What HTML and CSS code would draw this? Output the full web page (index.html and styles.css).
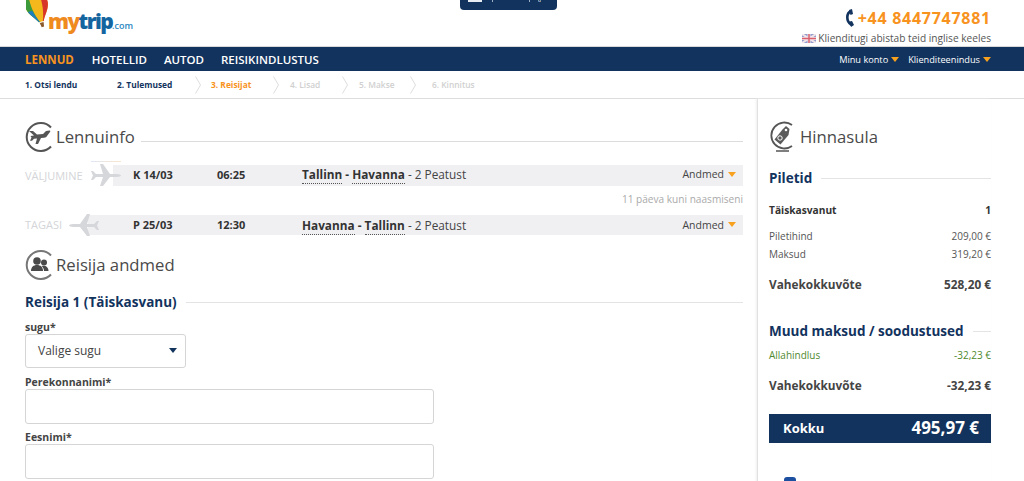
FILE: index.html
```html
<!DOCTYPE html>
<html lang="et">
<head>
<meta charset="utf-8">
<title>mytrip.com</title>
<link rel="stylesheet" href="styles.css">
</head>
<body>
<div class="page">
  <div class="tab"><span class="tab-flag"></span><span class="tab-sep"></span><span class="tab-text">Eesti</span><span class="tab-sep"></span><span class="tab-caret">v</span></div>
  <header class="top">
    <a class="logo">
      <svg class="balloon" width="25" height="29" viewBox="0 0 25 29">
        <g transform="rotate(-16 12 8)">
          <path d="M12 -6C4 -6 0 -1 0 4c0 7 7 13 9 18h5c2-5 9-11 9-18 0-5-4-10-11-10z" fill="#f5b81c"/>
          <path d="M0 4c0 7 7 13 9 18h1C7 15 5 5 6 -5 2 -4 0 0 0 4z" fill="#3c9a3a"/>
          <path d="M23 4c0 7-7 13-9 18h-1c3-7 5-17 4-27 4 1 6 5 6 9z" fill="#d8352a"/>
          <path d="M1.200 9c1.700 4 5.300 8.500 7.800 13h1C8 17 6.500 13 5.700 9z" fill="#1f7fbe"/>
          <path d="M9.500 23h4l-.8 4.500h-2.400z" fill="#8a5a2b"/>
        </g>
      </svg>
      <span class="logo-text"><span class="logo-my">my</span><span class="logo-trip">trip</span><span class="logo-com">.com</span></span>
    </a>
    <div class="contact">
      <div class="phone">
        <svg width="10" height="18" viewBox="0 0 10 18"><path d="M7 2C2.500 4 1.500 12 7.500 16" fill="none" stroke="#12335e" stroke-width="2.600"/><path d="M5 1l3-1 1 5-2.500 1zM5.500 12.500L8 12l2 4-3 2z" fill="#12335e"/></svg>
        <span>+44 8447747881</span>
      </div>
      <div class="support">
        <svg class="flag" width="14" height="9" viewBox="0 0 14 9"><rect width="14" height="9" fill="#8e9bcb"/><path d="M0 0l14 9M14 0L0 9" stroke="#f3e6ea" stroke-width="2"/><path d="M7 0v9M0 4.500h14" stroke="#f3e6ea" stroke-width="3"/><path d="M7 0v9M0 4.500h14" stroke="#d9606f" stroke-width="1.500"/></svg>
        <span>Klienditugi abistab teid inglise keeles</span>
      </div>
    </div>
  </header>
  <nav class="nav">
    <div class="nav-main">
      <a class="nav-link is-active">LENNUD</a>
      <a class="nav-link">HOTELLID</a>
      <a class="nav-link">AUTOD</a>
      <a class="nav-link">REISIKINDLUSTUS</a>
    </div>
    <div class="nav-side">
      <a class="nav-small">Minu konto<i class="caret"></i></a>
      <a class="nav-small">Klienditeenindus<i class="caret"></i></a>
    </div>
  </nav>
  <div class="steps">
    <span class="step step-1 is-done">1. Otsi lendu</span>
    <span class="step step-2 is-done">2. Tulemused</span>
    <svg class="chev" width="6" height="18" viewBox="0 0 6 18"><path d="M0.500 0.500L5.500 9L0.500 17.500" fill="none" stroke="#ddd"/></svg>
    <span class="step step-3 is-current">3. Reisijat</span>
    <svg class="chev" width="6" height="18" viewBox="0 0 6 18"><path d="M0.500 0.500L5.500 9L0.500 17.500" fill="none" stroke="#ddd"/></svg>
    <span class="step step-4">4. Lisad</span>
    <svg class="chev" width="6" height="18" viewBox="0 0 6 18"><path d="M0.500 0.500L5.500 9L0.500 17.500" fill="none" stroke="#ddd"/></svg>
    <span class="step step-5">5. Makse</span>
    <svg class="chev" width="6" height="18" viewBox="0 0 6 18"><path d="M0.500 0.500L5.500 9L0.500 17.500" fill="none" stroke="#ddd"/></svg>
    <span class="step step-6">6. Kinnitus</span>
  </div>
  <main class="main">
    <section class="content">
      <div class="heading heading-flight">
        <svg class="round-icon" width="30" height="32" viewBox="0 0 30 32">
          <path d="M26 6.500A14 14 0 1 0 26 25.500" fill="none" stroke="#555" stroke-width="2"/>
          <path d="M4 10l4 0 4 3.500 6-.5 3-3 3.500-.5c1 0 1 1 .5 1.500L22 15c-.5 1-1.500 1.500-3 1.700l-3 .3-3 6h-2.500l1.500-5.500-3 .3-2 2H5l1.500-3.300L5.500 15 9 14.500z" fill="#555"/>
        </svg>
        <h2 class="heading-text">Lennuinfo</h2>
        <span class="rule"></span>
      </div>
      <div class="flight flight-out">
        <i class="leg-glint"></i>
        <div class="leg-head leg-head-out">
          <span class="leg-label">VÄLJUMINE</span>
          <svg class="leg-plane" width="30" height="24" viewBox="0 0 30 24"><path d="M0 8l2 0 3 3h7L9 1h3l7 10h7c2 0 4 1 4 1.500S28 14 26 14h-7l-7 9H9l3-9H5l-3 3H0l2-4.500z" fill="#d6d7da"/></svg>
        </div>
        <div class="leg-bar leg-bar-out">
          <span class="leg-date">K 14/03</span>
          <span class="leg-time">06:25</span>
          <span class="leg-route"><b class="city">Tallinn</b> <b>-</b> <b class="city">Havanna</b> - 2 Peatust</span>
          <span class="leg-more">Andmed<i class="caret"></i></span>
        </div>
      </div>
      <div class="gap-note">11 päeva kuni naasmiseni</div>
      <div class="flight flight-back">
        <div class="leg-head leg-head-back">
          <span class="leg-label">TAGASI</span>
          <svg class="leg-plane" width="30" height="24" viewBox="0 0 30 24"><path d="M30 8h-2l-3 3h-7l3-10h-3l-7 10H4c-2 0-4 1-4 1.500S2 14 4 14h7l7 9h3l-3-9h7l3 3h2l-2-4.500z" fill="#d6d7da"/></svg>
        </div>
        <div class="leg-bar leg-bar-back">
          <span class="leg-date">P 25/03</span>
          <span class="leg-time">12:30</span>
          <span class="leg-route"><b class="city">Havanna</b> <b>-</b> <b class="city">Tallinn</b> - 2 Peatust</span>
          <span class="leg-more">Andmed<i class="caret"></i></span>
        </div>
      </div>
      <div class="heading heading-traveller">
        <svg class="round-icon" width="30" height="32" viewBox="0 0 30 32">
          <path d="M26 6.500A14 14 0 1 0 26 25.500" fill="none" stroke="#777" stroke-width="2"/>
          <circle cx="12" cy="12" r="3.800" fill="#4a4a4a"/><path d="M6 22c0-4 2.500-6 6-6s6 2 6 6z" fill="#4a4a4a"/>
          <circle cx="19" cy="13.500" r="3" fill="#4a4a4a"/><path d="M16.500 17c4-1 7 1 7 5h-4.500c0-2-1-4-2.500-5z" fill="#4a4a4a"/>
        </svg>
        <h2 class="heading-text">Reisija andmed</h2>
      </div>
      <div class="sub-heading">
        <h3 class="sub-title">Reisija 1 (Täiskasvanu)</h3>
        <span class="rule rule-soft"></span>
      </div>
      <form class="form">
        <label class="field-label">sugu*</label>
        <div class="select"><span>Valige sugu</span><i class="select-caret"></i></div>
        <label class="field-label">Perekonnanimi*</label>
        <div class="input"></div>
        <label class="field-label">Eesnimi*</label>
        <div class="input"></div>
      </form>
    </section>
    <aside class="side">
      <div class="heading heading-price">
        <svg class="round-icon" width="28" height="32" viewBox="0 0 28 32">
          <path d="M23 4A13 13 0 1 0 23 25" fill="none" stroke="#555" stroke-width="1.800"/>
          <path d="M7 30h13" stroke="#555" stroke-width="1.500"/>
          <path d="M17 5l3.500 3-1 6-8 9.500-6-5 8-10z" fill="#5a5a5a"/>
          <circle cx="17" cy="9" r="1.300" fill="#fff"/>
          <circle cx="11" cy="17" r="2.200" fill="none" stroke="#fff"/>
        </svg>
        <h2 class="heading-text heading-text-side">Hinnasula</h2>
      </div>
      <div class="sub-heading sub-heading-first">
        <h3 class="sub-title">Piletid</h3>
        <span class="rule rule-soft"></span>
      </div>
      <div class="row row-strong row-pax"><span>Täiskasvanut</span><span>1</span></div>
      <div class="row row-price"><span>Piletihind</span><span>209,00 €</span></div>
      <div class="row row-tax"><span>Maksud</span><span>319,20 €</span></div>
      <div class="row row-sub row-sub-first"><span>Vahekokkuvõte</span><span>528,20 €</span></div>
      <div class="sub-heading sub-heading-second">
        <h3 class="sub-title">Muud maksud / soodustused</h3>
        <span class="rule rule-soft"></span>
      </div>
      <div class="row row-discount"><span>Allahindlus</span><span>-32,23 €</span></div>
      <div class="row row-sub row-sub-second"><span>Vahekokkuvõte</span><span>-32,23 €</span></div>
      <div class="total"><span class="total-label">Kokku</span><span class="total-value">495,97 €</span></div>
      <div class="pay"><i class="pay-mark"></i><span class="pay-text">PayPal</span></div>
    </aside>
  </main>
</div>
</body>
</html>
```
FILE: styles.css
```css
* { box-sizing: border-box; }
html, body { margin: 0; height: 100%; overflow: hidden; background: #fff; }
body { font-family: "Open Sans", "Liberation Sans", sans-serif; color: #4a4a4a; }
h2, h3 { margin: 0; font-weight: 400; }
.page { position: relative; width: 1024px; height: 481px; overflow: hidden; }

.tab { position: absolute; top: 0; left: 460px; width: 97px; height: 10px; background: #12335e; border-radius: 0 0 4px 4px; display: flex; align-items: flex-end; padding: 0 0 8px 8px; color: #fff; font-size: 7px; line-height: 8px; }
.tab-flag { width: 14px; height: 3px; margin-top: -3px; margin-right: 10px; background: #e8edf3; }
.tab-sep { width: 1px; height: 8px; background: #9fb0c6; margin-right: 8px; }
.tab-text { margin-right: 8px; width: 20px; height: 5px; overflow: hidden; line-height: 2px; font-weight: 600; }
.tab-caret { font-size: 6px; line-height: 2px; height: 2px; overflow: hidden; }

.top { height: 47px; border-bottom: 1px solid #d8d8d8; display: flex; justify-content: space-between; padding: 0 33px 0 26px; }
.logo { display: flex; align-items: flex-start; height: 46px; }
.balloon { display: block; }
.logo-text { margin: 8px 0 0 -3px; font-weight: 800; font-size: 21px; line-height: 26px; letter-spacing: -1.600px; white-space: nowrap; }
.logo-my { color: #ef8a1e; }
.logo-trip { color: #14659f; }
.logo-com { color: #2a86bf; font-size: 9px; letter-spacing: 0; font-weight: 600; }
.contact { display: flex; flex-direction: column; align-items: flex-end; }
.phone { display: flex; align-items: center; gap: 4px; margin-top: 8px; height: 20px; color: #f7931e; font-size: 16px; font-weight: 700; letter-spacing: .73px; white-space: nowrap; }
.support { display: flex; align-items: center; gap: 2px; margin-top: 3px; height: 14px; font-size: 10.150px; color: #555; white-space: nowrap; }

.nav { height: 24px; background: #12335e; display: flex; justify-content: space-between; align-items: center; padding: 0 33px 0 25px; }
.nav-main { display: flex; gap: 17px; }
.nav-link { color: #fff; font-size: 11.500px; font-weight: 600; line-height: 23px; white-space: nowrap; }
.nav-link.is-active { color: #f7931e; font-weight: 700; margin-right: 1px; }
.nav-side { display: flex; gap: 9px; }
.nav-small { color: #fff; font-size: 9.200px; line-height: 23px; display: flex; align-items: center; white-space: nowrap; }
.caret { display: inline-block; width: 0; height: 0; margin-left: 4px; border-left: 4px solid transparent; border-right: 4px solid transparent; border-top: 5px solid #f7a11e; }
.nav-small .caret { margin-left: 3px; }

.steps { height: 28px; border-bottom: 1px solid #ddd; display: flex; align-items: center; padding-left: 25px; font-size: 8.400px; font-weight: 600; color: #d0d0d0; white-space: nowrap; }
.step-1 { width: 92px; }
.step-2 { width: 78px; }
.step-3 { width: 62px; margin-left: 10px; }
.step-4 { width: 52px; margin-left: 11px; }
.step-5 { width: 51px; margin-left: 11px; }
.step-6 { margin-left: 16px; }
.step.is-done { color: #12335e; font-weight: 700; }
.step.is-current { color: #f7931e; font-weight: 700; }
.chev { flex: none; }

.main { display: flex; padding-left: 25px; }
.content { width: 718px; padding-top: 22px; flex: none; }
.heading { display: flex; align-items: center; height: 32px; }
.round-icon { flex: none; display: block; }
.heading-text { font-size: 16.700px; line-height: 32px; color: #4a4a4a; margin-left: 1px; white-space: nowrap; }
.rule { flex: 1; height: 1px; background: #dcdcdc; margin-left: 6px; }
.heading-flight .rule { margin-top: 9px; }
.rule-soft { background: #e4e4e4; }

.flight { display: flex; height: 21px; position: relative; }
.flight-out { margin-top: 12px; }
.flight-back { margin-top: 1px; height: 20px; }
.leg-glint { position: absolute; left: 66px; top: -4px; width: 30px; height: 1px; background: linear-gradient(90deg, #dfe6f5, #f9e6cc); }
.leg-head { flex: none; display: flex; align-items: center; white-space: nowrap; position: relative; z-index: 1; padding-bottom: 1px; }
.leg-head-out { width: 88px; }
.leg-head-back { width: 63px; }
.leg-label { font-size: 11px; color: #d4d5d8; flex: none; }
.leg-head-out .leg-label { width: 66px; }
.leg-head-back .leg-label { width: 44px; }
.leg-plane { flex: none; }
.leg-bar { flex: 1; display: flex; align-items: center; background: #f0f0f3; font-size: 11.800px; color: #444; padding-bottom: 3px; }
.leg-bar-out { padding-left: 20px; }
.leg-bar-back { padding-left: 45px; padding-bottom: 1px; }
.leg-date { width: 84px; font-weight: 700; font-size: 11px; color: #333; }
.leg-time { width: 85px; font-weight: 700; font-size: 11px; color: #333; }
.leg-route { flex: 1; white-space: nowrap; }
.leg-route b { font-weight: 700; color: #333; }
.city { border-bottom: 1px dotted #555; padding-bottom: 1px; }
.leg-more { font-size: 10.500px; display: flex; align-items: center; padding-right: 7px; }
.gap-note { height: 28px; line-height: 27px; text-align: right; font-size: 10.100px; color: #aaa; }

.heading-traveller { margin-top: 14px; }
.sub-heading { display: flex; align-items: center; height: 20px; }
.content .sub-heading { margin-top: 11px; }
.sub-title { font-size: 13.500px; font-weight: 700; color: #12335e; line-height: 20px; white-space: nowrap; }
.sub-heading .rule { margin-left: 9px; }

.form { margin-top: 8px; }
.field-label { display: block; font-size: 10.500px; font-weight: 700; color: #444; line-height: 14px; }
.select { width: 161px; height: 34px; border: 1px solid #d5d5d5; border-radius: 3px; display: flex; align-items: center; justify-content: space-between; padding: 0 8px 2px 12px; font-size: 12px; color: #444; margin-bottom: 7px; }
.select-caret { width: 0; height: 0; border-left: 4px solid transparent; border-right: 4px solid transparent; border-top: 5px solid #12335e; }
.input { width: 409px; height: 35px; border: 1px solid #d5d5d5; border-radius: 3px; margin-bottom: 6px; }

.side { width: 234px; margin-left: 14px; padding: 22px 0 0 11px; height: 383px; border-left: 1px solid #e2e2e2; box-shadow: -1px 0 2px #eee; flex: none; }
.heading-price { height: 32px; }
.heading-text-side { font-size: 16.700px; margin-left: 3px; }
.sub-heading-first { margin-top: 15px; }
.sub-heading-second { margin-top: 28px; }
.row { display: flex; justify-content: space-between; font-size: 10px; color: #555; white-space: nowrap; }
.row-strong { font-weight: 700; color: #333; margin-top: 14px; line-height: 16px; font-size: 10.200px; }
.row-price { margin-top: 9px; line-height: 18px; }
.row-tax { line-height: 18px; }
.row-sub { font-size: 11.800px; font-weight: 700; color: #444; line-height: 18px; }
.row-sub-first { margin-top: 12px; }
.row-discount { color: #4f8a2e; margin-top: 5px; line-height: 18px; }
.row-sub-second { margin-top: 12px; }
.total { display: flex; justify-content: space-between; align-items: center; margin-top: 20px; height: 29px; background: #12335e; color: #fff; padding: 0 12px 2px 14px; font-weight: 700; }
.total-label { font-size: 13px; }
.total-value { font-size: 17px; }
.pay { display: flex; align-items: flex-start; margin: 34px 0 0 15px; height: 4px; overflow: hidden; }
.pay-mark { width: 12px; height: 12px; border-radius: 3px; background: #1c4fa0; }
.pay-text { margin-left: 7px; font-size: 11px; color: #4aa3df; font-weight: 700; line-height: 11px; padding-top: 2px; }
```
